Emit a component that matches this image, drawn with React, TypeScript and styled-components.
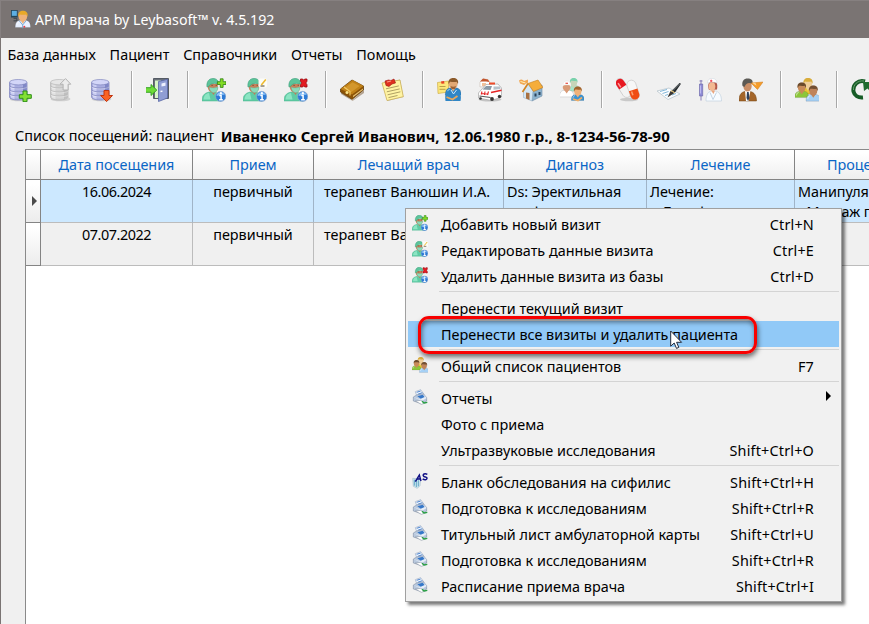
import React from 'react';
import styled, { createGlobalStyle, css } from 'styled-components';

const GlobalStyle = createGlobalStyle`
  *, *::before, *::after { box-sizing: border-box; }
  body { margin: 0; overflow: hidden; }
`;

const Window = styled.div`
  position: relative;
  display: flex;
  flex-direction: column;
  width: 869px;
  height: 624px;
  overflow: hidden;
  background: #f0f0f0;
  color: #000;
  font: 14.4px/20px 'Noto Sans', 'Open Sans', sans-serif;
  white-space: nowrap;
`;

const TitleBar = styled.header`
  display: flex;
  align-items: center;
  flex: 0 0 38px;
  gap: 4.5px;
  padding: 0 0 0 9.5px;
  border-top: 1px solid #868080;
  border-left: 1px solid #868080;
  background: #7a7473;
  color: #fff;
  font-size: 14.2px;
`;

const Client = styled.div`
  display: flex;
  flex: 1;
  flex-direction: column;
  min-height: 0;
  border-left: 1px solid #7a7473;
`;

const MenuBar = styled.nav`
  display: flex;
  align-items: center;
  flex: 0 0 33px;
  gap: 13.8px;
  padding-left: 6.5px;
`;

const MenuTitle = styled.span`
  letter-spacing: 0;
`;

const Toolbar = styled.div`
  display: flex;
  flex: 0 0 38px;
  padding-left: 7px;
`;

const ToolButton = styled.span`
  display: flex;
  align-items: center;
  flex: 0 0 41px;
  height: 38px;
`;

const ToolSeparator = styled.span`
  flex: 0 0 15px;
  height: 37px;
  background: linear-gradient(90deg, #a8a8a8 1px, #fff 1px, #fff 2px, transparent 2px);
`;

const Caption = styled.div`
  display: flex;
  align-items: center;
  flex: 0 0 40px;
  gap: 6.7px;
  padding: 13px 0 0 14px;
`;

const PatientName = styled.strong`
  font-size: 14.95px;
  font-weight: 700;
`;

const Grid = styled.div`
  display: grid;
  grid-template-columns: 15px 152px 121px 190px 143px 148px 145px;
  grid-template-rows: 30px 43px 43px;
  flex: 1;
  margin-left: 24px;
  border-top: 1px solid #8a8a8a;
  border-left: 1px solid #8a8a8a;
  background: #fff;
`;

const HeaderCell = styled.div`
  display: flex;
  align-items: center;
  justify-content: center;
  border-right: 1px solid #848484;
  border-bottom: 1px solid #848484;
  background: linear-gradient(#fff 10%, #efefef);
  color: #0b66c6;
`;

const Indicator = styled.div`
  display: flex;
  align-items: center;
  justify-content: center;
  padding-left: 2px;
  border-right: 1px solid #848484;
  border-bottom: 1px solid #848484;
  background: linear-gradient(#fff 10%, #ececec);
`;

const Cell = styled.div<{ $selected?: boolean; $align?: string; $indent?: number; $spacing?: number }>`
  overflow: hidden;
  padding: 2px 0 0 ${(p) => p.$indent ?? 0}px;
  border-right: 1px solid ${(p) => (p.$selected ? '#a0b4c8' : '#bcbcbc')};
  border-bottom: 1px solid #bcbcbc;
  background: ${(p) => (p.$selected ? '#cce8ff' : '#f0f0f0')};
  letter-spacing: ${(p) => p.$spacing ?? 0}px;
  text-align: ${(p) => p.$align ?? 'center'};
  white-space: pre;
`;

const ContextMenu = styled.div`
  position: absolute;
  top: 208px;
  left: 405px;
  display: flex;
  flex-direction: column;
  width: 437px;
  height: 394px;
  padding: 2px;
  border: 1px solid #a0a0a0;
  background: #f1f1f1;
  box-shadow: 3px 3px 3px rgba(0, 0, 0, 0.52);
`;

const MenuItem = styled.div<{ $active?: boolean }>`
  display: flex;
  align-items: center;
  flex: 0 0 26px;
  padding: 2px 25px 0 4px;
  ${(p) =>
    p.$active &&
    css`
      background: #91c9f7;
    `}
`;

const ItemIcon = styled.span`
  display: flex;
  flex: 0 0 29px;
  margin-top: -4px;
`;

const ItemLabel = styled.span`
  flex: 1;
`;

const Shortcut = styled.span`
  letter-spacing: 0.18px;
`;

const SubmenuArrow = styled.svg`
  margin: -6px -17px 0 0;
`;

const MenuSeparator = styled.div`
  flex: 0 0 6px;
  margin-left: 31px;
  background: linear-gradient(transparent 2px, #d4d4d4 2px, #d4d4d4 3px, transparent 3px);
`;

const Highlight = styled.div`
  position: absolute;
  top: 316px;
  left: 418px;
  width: 339px;
  height: 38px;
  border: 3px solid #f80000;
  border-radius: 11px;
  box-shadow: 1px 3px 5px rgba(0, 0, 0, 0.55), inset 1px 3px 5px rgba(0, 0, 0, 0.5);
`;

const Pointer = styled.svg`
  position: absolute;
  top: 330px;
  left: 670px;
`;

const Icon = ({ size = 24, children }: { size?: number; children: React.ReactNode }) => (
  <svg width={size} height={size} viewBox="0 0 24 24">
    {children}
  </svg>
);

/* ---------- toolbar drawings ---------- */

const Cylinder = ({ body, dark, light, edge }: { body: string; dark: string; light: string; edge: string }) => (
  <>
    <ellipse cx="11.500" cy="21" rx="10" ry="2.300" fill="#000" opacity=".13" />
    <path d="M1.500 4.500v14.500c0 1.700 4 3 8.700 3s8.800-1.300 8.800-3V4.500z" fill={body} stroke={edge} strokeWidth=".8" />
    <path d="M3 5v15l3.500 1.200V6z" fill={light} opacity=".8" />
    <path d="M15 6v15.200l3.500-1.400V5z" fill={dark} opacity=".7" />
    <ellipse cx="10.250" cy="4.200" rx="8.700" ry="2.700" fill={light} stroke={edge} strokeWidth=".7" />
    {[8, 12, 16].map((y) => (
      <g key={y} fill="none">
        <path d={`M1.700 ${y}c2 2.600 15 2.600 17.200 0`} stroke={edge} strokeWidth=".8" />
        <path d={`M1.700 ${y + 1}c2 2.600 15 2.600 17.200 0`} stroke="#fff" strokeWidth=".6" opacity=".6" />
      </g>
    ))}
  </>
);

const DbAdd = () => (
  <Icon>
    <Cylinder body="#a9ade0" dark="#7178bd" light="#d3d6f8" edge="#8388bf" />
    <path d="M15 13h4v3.700h4.300v3.600H19v3.400h-4v-3.400h-3.700v-3.600H15z" fill="#83df35" stroke="#2b8e16" />
  </Icon>
);

const DbUp = () => (
  <Icon>
    <Cylinder body="#d2d2d2" dark="#b6b6b6" light="#e6e6e6" edge="#b8b8b8" />
    <path d="M16.500.600l5.300 5.600h-2.700V12h-5V6.200H11z" fill="#ececec" stroke="#b3b3b3" />
  </Icon>
);

const DbDown = () => (
  <Icon>
    <Cylinder body="#a9ade0" dark="#7178bd" light="#d3d6f8" edge="#8388bf" />
    <path d="M14 12.500h5v5h3.500L16.600 23.600 10.600 17.500H14z" fill="#fa6224" stroke="#bf3410" />
  </Icon>
);

const Door = () => (
  <Icon>
    <path d="M7.500.500h15v20h-15z" fill="#697078" stroke="#555b64" />
    <path d="M9 2.500h6V20H9z" fill="#d7f5c6" />
    <path d="M12.500 3.500l9-2.200V20l-9 3.500z" fill="#8f9dd4" stroke="#5967a6" strokeWidth=".8" />
    <path d="M15.500 5.500l4-1v3.200l-4 .9z" fill="#edf1ff" />
    <path d="M14.500 13.500l2-.4" stroke="#fff" strokeWidth="1.400" />
    <path d="M-.500 9.700H5V6.500l5.800 5.600L5 17.500v-3.200H-.500z" fill="#6edb38" stroke="#2a9b1a" strokeWidth=".9" />
  </Icon>
);

const SurgeonFigure = () => (
  <>
    <path d="M0 23c0-5 1.500-7.500 7-9h6c4 1 5.500 4 6 9z" fill="#5fcba4" stroke="#4bb48f" strokeWidth=".5" />
    <path d="M1.500 21.500C2 17 3.500 15.800 7 15l1.500 6.500z" fill="#8ce5c3" />
    <path d="M8.500 12.500l3 4.500 3-4.500z" fill="#c07a58" />
    <path d="M5.800 6h10v4.500c-.6 3-2.500 4.300-4.700 4.300-3 0-4.800-2.300-5.300-5z" fill="#c6805a" />
    <path d="M5 9C4.300 3.500 7 .500 11 .500c3.700 0 5.800 2.200 5.400 5.700C13.500 4.800 8.500 5 6.500 8.500z" fill="#5cc49a" stroke="#3a9f7b" strokeWidth=".6" />
    <path d="M7.200 9.300c3 .9 6 .8 8.800-.2-.3 3.600-1.700 5.600-4.200 5.600s-4.100-2.200-4.600-5.400z" fill="#8adbbb" stroke="#5fb896" strokeWidth=".4" />
    <path d="M9.500 7.400h1.200m3-.1h1.100" stroke="#5c3c28" strokeWidth=".8" />
  </>
);

const InfoBall = () => (
  <>
    <circle cx="18.700" cy="18.500" r="5.100" fill="#2d7bd6" stroke="#8eabd0" strokeWidth=".7" />
    <path d="M14.500 17.500a4.300 4.300 0 0 1 8.300-.3c-3-1.600-5.500 1.200-8.300.3z" fill="#8dc3f8" />
    <path d="M17.300 17.500h1.800v4.300m-2 0h3.700" fill="none" stroke="#fff" strokeWidth="1.500" />
    <circle cx="18.900" cy="15.200" r="1.100" fill="#fff" />
  </>
);

type Mark = 'add' | 'edit' | 'delete';

const Surgeon = ({ mark, size }: { mark: Mark; size?: number }) => (
  <Icon size={size}>
    <SurgeonFigure />
    <InfoBall />
    {mark === 'add' && (
      <path d="M18.300.800h2.800v2.900H24v2.800h-2.900v2.900h-2.800V6.500h-2.900V3.700h2.900z" fill="#83dc24" stroke="#2c8010" strokeWidth=".8" />
    )}
    {mark === 'edit' && (
      <>
        <rect x="15.500" y=".500" width="8.500" height="9" rx="2" fill="#fcfcf6" />
        <path d="M17.500 8h4" stroke="#4b4030" strokeWidth="1" />
        <path d="M18.300 7l4.500-5.500" stroke="#edb92c" strokeWidth="1.500" />
      </>
    )}
    {mark === 'delete' && (
      <path d="M16.500 1h2.200l1 1.200 1-1.200H23v2.200L21.800 5 23 6.700V9h-2.300l-1-1.200-1 1.200h-2.200V6.700L17.700 5l-1.200-1.800z" fill="#e31c22" stroke="#980a10" strokeWidth=".8" />
    )}
  </Icon>
);

const Book = () => (
  <Icon>
    <path d="M1 14l11 8.500L24 12v3L12.500 23 1 16z" fill="#5a3306" opacity=".4" />
    <path d="M.500 11L12 2l11.500 6v4L12 21.500.500 14z" fill="#8c5306" stroke="#5a3606" strokeWidth=".7" />
    <path d="M.700 11L12.500 2l11 6L12 16.500z" fill="#c08118" />
    <path d="M4 10.500l8.500-6.200 7 3.700L11.500 14z" fill="#dba136" opacity=".7" />
    <path d="M13 17.800l10-7.300v1.300l-10 7.500z" fill="#e6c47a" />
    <path d="M4 9l6 4.500v4" fill="none" stroke="#f0c964" strokeWidth="1.200" />
    <circle cx="7" cy="14.500" r="1.500" fill="#fae48c" />
  </Icon>
);

const Note = () => (
  <Icon>
    <path d="M2 6l17-4.500L22.500 19 6.500 23z" fill="#000" opacity=".22" />
    <path d="M1 5l18-3 3.300 16.700L6 22.500z" fill="#fff4a4" stroke="#c9a947" strokeWidth=".7" />
    <path d="M5 10.800l12.800-2.900M5.800 13.800l12.900-2.900M6.600 16.800l12.800-3M7.500 19.600l9-2.100" stroke="#a6965c" strokeWidth=".9" />
    <path d="M4 3l3.500-1 2.500.5 3-1.500 1.500 4-3.500 1-3 2.500-3-1z" fill="#e0301f" stroke="#980f0a" strokeWidth=".6" />
    <path d="M6 4l4-1" stroke="#ff9a80" strokeWidth="1.200" />
  </Icon>
);

const Person = ({ x, y, scale = 1, hair, coat, skin = '#efb27a' }: { x: number; y: number; scale?: number; hair: string; coat: string; skin?: string }) => (
  <g transform={`translate(${x} ${y}) scale(${scale})`}>
    <path d="M0 14c0-4 1.500-6 5-6h3c3.500 0 5 2 5 6z" fill={coat} stroke="#000" strokeOpacity=".22" strokeWidth=".5" />
    <path d="M4.500 8h4l-2 3z" fill={skin} />
    <ellipse cx="6.500" cy="4.700" rx="3.600" ry="4.400" fill={skin} />
    <path d="M2.700 5C2 1.700 4 0 6.500 0s4.700 1.500 3.900 5L9.300 3C7 3.500 5 3 3.900 3z" fill={hair} />
    <path d="M1.500 12c.3-2 1.200-2.700 2.200-3" stroke="#fff" strokeOpacity=".5" fill="none" />
  </g>
);

const NotePerson = () => (
  <Icon>
    <path d="M.500 4.500l11-1.500v11L1 15.500z" fill="#fce77b" stroke="#c9a438" strokeWidth=".6" />
    <path d="M2.500 8.500h6M2.500 11.300h6" stroke="#b8a04a" />
    <path d="M4 3.500l3-.5.500 2.500-3 .3z" fill="#e74026" />
    <Person x={8.300} y={0} scale={1.22} hair="#8b5a2a" coat="#2c85c7" skin="#e2a873" />
    <path d="M13.500 8c1.500 1 4 1 5.500 0l-1 3h-3.500z" fill="#9c6234" />
    <path d="M10 13c-2 3-2 6-1.500 10h15c1-5 0-8-2-10.500l-4 3z" fill="#2f86c6" />
    <path d="M14 12l2.500 4 3-4" stroke="#cfe9fb" fill="none" />
    <path d="M9.500 19l6 2.500 5-3.500" stroke="#e7a75c" strokeWidth="1.800" fill="none" />
  </Icon>
);

const Ambulance = () => (
  <Icon>
    <ellipse cx="12" cy="21.500" rx="11.500" ry="2" opacity=".18" />
    <path d="M2 9V4l3-3 5 .5 2 3.500-2 3z" fill="#fff" stroke="#c9bcb4" strokeWidth=".6" />
    <path d="M2 3.500L5 .500l5 1L11.500 4 8 3.500z" fill="#c2552d" />
    <path d="M4 5h4v3H4z" fill="#f0c09a" />
    <path d="M3 12l5-5.500 12-.5 3.500 4V19l-10 3.500L.500 20v-5z" fill="#fff" stroke="#a6a6a6" strokeWidth=".7" />
    <path d="M11 4.500h6v2h-6z" fill="#ef4c2a" />
    <path d="M4.500 11.500L8 8h6l-1.500 4z" fill="#8b99a5" />
    <path d="M15.500 8.500h6.500l.5 2.500-7 .8z" fill="#b7c3cc" />
    <path d="M13 14.500l10.500-2.300" stroke="#e42424" strokeWidth="1.500" fill="none" />
    <path d="M1.500 18l11 1.500" stroke="#555" strokeWidth="1.200" />
    <path d="M4 13.500l-.8 3M7 13.500l-.5 3.500M10.500 13.500L9.500 17M3 15.500l7.500.5" stroke="#e42424" strokeWidth="1.100" />
    <circle cx="14" cy="21" r="1.900" fill="#343434" />
    <circle cx="21.500" cy="18.500" r="1.700" fill="#343434" />
    <circle cx="2.500" cy="20.500" r="1.300" fill="#343434" />
  </Icon>
);

const House = () => (
  <Icon>
    <path d="M13 10l10-3v11l-10 5z" fill="#8cb2cd" stroke="#708ca4" strokeWidth=".6" />
    <path d="M4.500 13L9 6l5 7-1 10-8.500-3.500z" fill="#d3e7f5" stroke="#8ba7bd" strokeWidth=".5" />
    <path d="M9 5.500L19 2l5 7.500-9.500 4z" fill="#f5ad3b" stroke="#c47c1b" strokeWidth=".6" />
    <path d="M9 5.500L3.500 14" stroke="#d28521" strokeWidth="1.600" />
    <path d="M7 14.500l3.500.5v7L7 20.500z" fill="#a87142" />
    <path d="M16.500 15.500v3m4-4.500v3" stroke="#28435d" strokeWidth="2" />
    <path d="M0 2.500c2-2 4-1 5 .5l4-1.500v3L5 7 1 5.500z" fill="#f2a852" />
    <path d="M1.500 3.500l5 1.500" stroke="#fff3bb" />
  </Icon>
);

const MedicalTeam = () => (
  <Icon>
    <Person x={7.500} y={0} scale={0.95} hair="#78d2ac" coat="#a5e6cc" skin="#c6d5b8" />
    <Person x={-0.500} y={3.500} scale={1.1} hair="#fff" coat="#fff" skin="#d99a76" />
    <path d="M3.300 7.800C2.500 4.500 4.500 3 7 3s4 2 3.300 4.800C9 6.500 5 6.500 3.300 7.800z" fill="#fff" stroke="#d6d6d6" strokeWidth=".4" />
    <path d="M5.500 5.300h2.500" stroke="#e54b40" strokeWidth="1.200" />
    <Person x={11.300} y={8.500} scale={1} hair="#a0632c" coat="#3a93d3" />
    <path d="M13 21l5 1.500 4-3" stroke="#efad66" strokeWidth="1.600" fill="none" />
  </Icon>
);

const Pills = () => (
  <Icon>
    <ellipse cx="13" cy="21.500" rx="9" ry="1.800" opacity=".16" />
    <g transform="rotate(-33 7 9)">
      <rect x="2.500" y="-.500" width="8.500" height="21" rx="4.250" fill="#f3f3f3" stroke="#bebebe" strokeWidth=".6" />
      <path d="M2.500 9V4a4.250 4.250 0 0 1 8.500 0v5z" fill="#e71922" />
      <path d="M5 3v5" stroke="#ff9a98" strokeWidth="1.500" />
    </g>
    <g transform="rotate(-19 17 13)">
      <rect x="13" y="2" width="9" height="20" rx="4.500" fill="#f7f7f7" stroke="#c4c4c4" strokeWidth=".6" />
      <path d="M13 12h9v5.500a4.500 4.500 0 0 1-9 0z" fill="#f04d13" />
      <path d="M15.500 13v4" stroke="#ffa170" strokeWidth="1.500" />
    </g>
  </Icon>
);

const Pen = () => (
  <Icon>
    <path d="M0 13l12-3 11 6-12 5.500z" fill="#fbfdff" stroke="#b8c5cd" strokeWidth=".8" />
    <path d="M3 13.500l7-2M5.500 15.500l6-2M8 17.500l3-1M15 17l4-1.500" stroke="#84b8da" strokeWidth="1" />
    <path d="M15 12.500l7.500-7.500 1.500.700-6 8.800z" fill="#252a2d" />
    <path d="M16 12.500l6.500-6.500" stroke="#9ba1a4" strokeWidth=".7" />
    <path d="M10.500 19.500l3-6.500 4 2z" fill="#3b3834" />
    <path d="M13.800 12.500l4 2.200" stroke="#d6ac46" strokeWidth=".9" />
  </Icon>
);

const Nurse = () => (
  <Icon>
    <path d="M3 2v4M1.500 3h3M3 18v4.500" stroke="#7d75b5" strokeWidth=".9" />
    <path d="M1.500 6h3.200v12H1.500z" fill="#8d8ad6" stroke="#6761a5" strokeWidth=".6" />
    <path d="M2.600 7.500v8" stroke="#d9d6ff" strokeWidth=".7" />
    <path d="M11 12c-1.500-4-1-9 3.500-9.500 4 0 5.500 3 4.500 9z" fill="#b4594a" />
    <path d="M8 23c0-6 2-9.500 5.500-10h3.500c4 .5 6.500 4 6.500 10z" fill="#f7fbff" stroke="#bcccdb" strokeWidth=".6" />
    <ellipse cx="14" cy="8.500" rx="3.300" ry="4.300" fill="#f3b992" />
    <path d="M13 12.500h4l-1.500 3.500z" fill="#eba67e" />
    <path d="M9.500 5c0-3 2-5 5-4.500C17 .500 19 2 19 5c-3-1.200-6.500-1.200-9.500 0z" fill="#fff" stroke="#cbd3dc" strokeWidth=".5" />
    <path d="M12 2.900h2.400M13.200 1.700v2.400" stroke="#f03b49" />
    <path d="M12 14.500l3 7 3.500-7" stroke="#c3d4e4" fill="none" />
  </Icon>
);

const Announcer = () => (
  <Icon>
    <path d="M0 23c0-6 2-8.500 5.500-9.500h6c3.500 1 6 3.500 6 9.500z" fill="#a4662a" stroke="#70410f" strokeWidth=".5" />
    <path d="M6 12.500h5.500L9.500 23H7z" fill="#fff" />
    <path d="M8 14h1.700l.8 6-1.500 3-1.500-3z" fill="#30415a" />
    <ellipse cx="8.500" cy="8" rx="4.200" ry="5.500" fill="#c98e67" />
    <path d="M3.500 8C2.500 3 5 .500 8.500.500s6 1.500 5 5.500C10 4 7 5 5.500 9z" fill="#5c5a55" />
    <path d="M12 5l12-1-5.500 7.500z" fill="#f59c29" stroke="#ce7b1d" strokeWidth=".5" />
    <path d="M13 4.800h3.500l1 3z" fill="#ffd193" />
  </Icon>
);

const Team = ({ size }: { size?: number }) => (
  <Icon size={size}>
    <Person x={5.500} y={0} scale={1.15} hair="#d9ad3c" coat="#e9c832" skin="#f0cf9a" />
    <Person x={-0.300} y={4.500} scale={1.08} hair="#6b4a2b" coat="#8cc63a" skin="#c88b59" />
    <Person x={11} y={7.500} scale={1.12} hair="#735033" coat="#a5d0f5" skin="#bf835b" />
  </Icon>
);

const Refresh = () => (
  <Icon>
    <path d="M14 3.500C7 1.500 1.500 7 2.500 13.500 3.500 17.500 7 20 12 19.500" fill="none" stroke="#175c27" strokeWidth="4" />
    <path d="M13 3C6.500 2 2 7 2.500 12" fill="none" stroke="#67a36c" strokeWidth="1" />
    <path d="M12 4h8v10l-3.500-3.500L13 13z" fill="#1f6b2e" />
  </Icon>
);

/* ---------- title and menu drawings ---------- */

const AppLogo = () => (
  <Icon size={20}>
    <path d="M0 0h8v9H0z" fill="#24465a" />
    <path d="M1 1h6v6H1z" fill="#5eafe2" />
    <path d="M3 10h4v3H3" fill="none" stroke="#333d45" />
    <Person x={5} y={1} scale={1.42} hair="#e9a928" coat="#e9f1ff" />
    <path d="M10 13l4 5 4-5M14 18v4" stroke="#689dcd" fill="none" />
    <circle cx="16" cy="20" r="1.200" fill="#e83b44" />
  </Icon>
);

const Printer = () => (
  <Icon size={16}>
    <path d="M5 4l8-3 5 7-10 5z" fill="#f5faff" stroke="#9aaac4" />
    <path d="M7 5l6-2M8.500 8l7-2.500" stroke="#4b83cf" strokeWidth="1.500" />
    <path d="M2 12l5-3 10-2 5 6v5l-7 4-13-4z" fill="#b9c9de" stroke="#75839a" strokeWidth=".8" />
    <path d="M2 12l9 3 7-5.500 4 4-7 4.500z" fill="#e7eef8" />
    <path d="M8 11l8-2.500 3 3.500-6 2.500z" fill="#3577c8" />
    <path d="M5 18l8-1 7 4-6 2z" fill="#fff" stroke="#7f8b9c" strokeWidth=".8" />
    <path d="M15 18.500l3 2.500 5-1" stroke="#28a043" strokeWidth="2" fill="none" />
  </Icon>
);

const BlankForm = () => (
  <Icon size={16}>
    <path d="M1 8l12 1-1 10-4 4-6-3z" fill="#cbe6ef" stroke="#9bb8c4" strokeWidth=".8" />
    <path d="M3.500 10v9M6.500 10v11M9.500 11v9" stroke="#5da3c3" strokeWidth="1.400" />
    <path d="M5 13L11 3l2.500 9M7.500 9h5" stroke="#111186" strokeWidth="2.200" fill="none" />
    <path d="M23 2c-4-2-7 0-6 2 1 3 6 1 5.500 4 0 2-3 3-6.500 1" stroke="#111186" strokeWidth="2.200" fill="none" />
  </Icon>
);

/* ---------- data ---------- */

const toolGroups: React.ReactNode[][] = [
  [<DbAdd />, <DbUp />, <DbDown />],
  [<Door />],
  [<Surgeon mark="add" />, <Surgeon mark="edit" />, <Surgeon mark="delete" />],
  [<Book />, <Note />],
  [<NotePerson />, <Ambulance />, <House />, <MedicalTeam />],
  [<Pills />, <Pen />, <Nurse />, <Announcer />],
  [<Team />],
  [<Refresh />],
];

const columns = ['Дата посещения', 'Прием', 'Лечащий врач', 'Диагноз', 'Лечение', 'Процедуры'];

type Entry = { label: string; keys?: string; icon?: React.ReactNode; active?: boolean; submenu?: boolean };

const menuSections: Entry[][] = [
  [
    { label: 'Добавить новый визит', keys: 'Ctrl+N', icon: <Surgeon mark="add" size={16} /> },
    { label: 'Редактировать данные визита', keys: 'Ctrl+E', icon: <Surgeon mark="edit" size={16} /> },
    { label: 'Удалить данные визита из базы', keys: 'Ctrl+D', icon: <Surgeon mark="delete" size={16} /> },
  ],
  [{ label: 'Перенести текущий визит' }, { label: 'Перенести все визиты и удалить пациента', active: true }],
  [{ label: 'Общий список пациентов', keys: 'F7', icon: <Team size={16} /> }],
  [
    { label: 'Отчеты', icon: <Printer />, submenu: true },
    { label: 'Фото с приема' },
    { label: 'Ультразвуковые исследования', keys: 'Shift+Ctrl+O' },
  ],
  [
    { label: 'Бланк обследования на сифилис', keys: 'Shift+Ctrl+H', icon: <BlankForm /> },
    { label: 'Подготовка к исследованиям', keys: 'Shift+Ctrl+R', icon: <Printer /> },
    { label: 'Титульный лист амбулаторной карты', keys: 'Shift+Ctrl+U', icon: <Printer /> },
    { label: 'Подготовка к исследованиям', keys: 'Shift+Ctrl+R', icon: <Printer /> },
    { label: 'Расписание приема врача', keys: 'Shift+Ctrl+I', icon: <Printer /> },
  ],
];

export default function App() {
  return (
    <>
      <GlobalStyle />
      <Window>
        <TitleBar>
          <AppLogo />
          <span>АРМ врача by Leybasoft™ v. 4.5.192</span>
        </TitleBar>
        <Client>
          <MenuBar>
            {['База данных', 'Пациент', 'Справочники', 'Отчеты', 'Помощь'].map((title) => (
              <MenuTitle key={title}>{title}</MenuTitle>
            ))}
          </MenuBar>
          <Toolbar>
            {toolGroups.map((group, i) => (
              <React.Fragment key={i}>
                {i > 0 && <ToolSeparator />}
                {group.map((icon, j) => (
                  <ToolButton key={j}>{icon}</ToolButton>
                ))}
              </React.Fragment>
            ))}
          </Toolbar>
          <Caption>
            <span>Список посещений: пациент</span>
            <PatientName>Иваненко Сергей Иванович, 12.06.1980 г.р., 8-1234-56-78-90</PatientName>
          </Caption>
          <Grid>
            <HeaderCell />
            {columns.map((name) => (
              <HeaderCell key={name}>{name}</HeaderCell>
            ))}
            <Indicator>
              <svg width="5" height="10" viewBox="0 0 5 10">
                <path d="M0 0l5 5-5 5z" fill="#4a4a4a" />
              </svg>
            </Indicator>
            <Cell $selected $spacing={-0.45}>16.06.2024</Cell>
            <Cell $selected>первичный</Cell>
            <Cell $selected $align="left" $indent={10}>терапевт Ванюшин И.А.</Cell>
            <Cell $selected $align="left" $indent={3} $spacing={-0.1}>{'Ds: Эректильная\nдисфункция'}</Cell>
            <Cell $selected $align="left" $indent={3}>{'Лечение:\n - Левофлоксацин'}</Cell>
            <Cell $selected $align="left" $indent={3}>{'Манипуляции:\n- Массаж простаты'}</Cell>
            <Indicator />
            <Cell $spacing={-0.45}>07.07.2022</Cell>
            <Cell>первичный</Cell>
            <Cell $align="left" $indent={10}>терапевт Ванюшин И.А.</Cell>
            <Cell />
            <Cell />
            <Cell />
          </Grid>
        </Client>
        <ContextMenu>
          {menuSections.map((section, i) => (
            <React.Fragment key={i}>
              {i > 0 && <MenuSeparator />}
              {section.map((item, j) => (
                <MenuItem key={j} $active={item.active}>
                  <ItemIcon>{item.icon}</ItemIcon>
                  <ItemLabel>{item.label}</ItemLabel>
                  {item.keys && <Shortcut>{item.keys}</Shortcut>}
                  {item.submenu && (
                    <SubmenuArrow width="5" height="10" viewBox="0 0 5 10">
                      <path d="M0 0l5 5-5 5z" />
                    </SubmenuArrow>
                  )}
                </MenuItem>
              ))}
            </React.Fragment>
          ))}
        </ContextMenu>
        <Highlight />
        <Pointer width="13" height="20" viewBox="0 0 13 20">
          <path d="M.700 1v15.200l3.500-3.200 2.300 5.400 2.300-1-2.200-5.100h5z" fill="#fff" stroke="#222a3c" strokeWidth="1" />
        </Pointer>
      </Window>
    </>
  );
}
